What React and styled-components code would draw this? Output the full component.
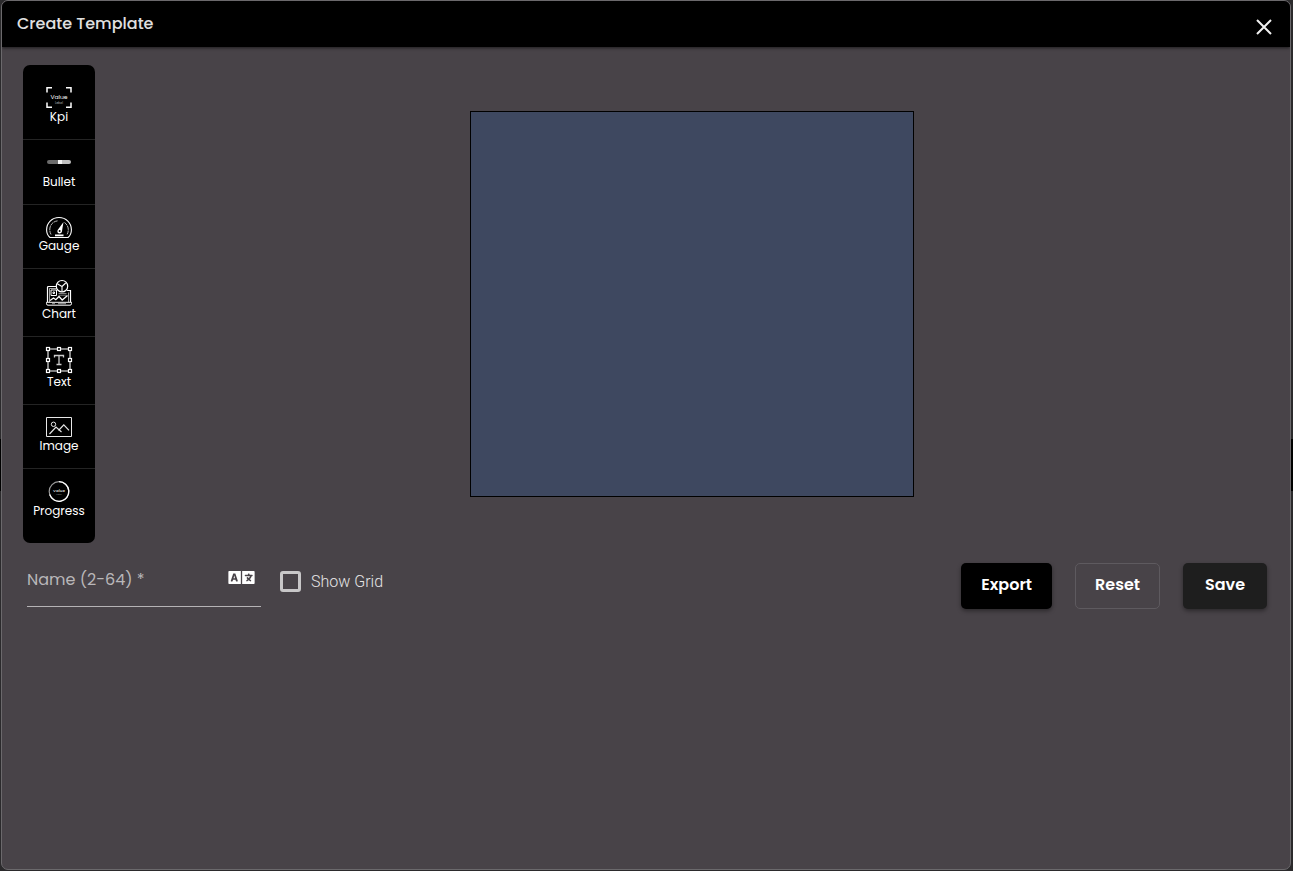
import { useState } from 'react';
import styled, { createGlobalStyle, css } from 'styled-components';
import { FaLanguage } from 'react-icons/fa';

const GlobalStyle = createGlobalStyle`
  * {
    box-sizing: border-box;
  }

  body {
    margin: 0;
    background-color: #2b2a2c;
    font-family: Poppins, Inter, sans-serif;
  }
`;

const Page = styled.div`
  position: relative;
  display: flex;
  min-height: 100vh;
  padding: 0 2px 1px 1px;
  overflow: hidden;
`;

/* Strip of the page that shows behind the dialog */
const PageStrip = styled.div`
  position: absolute;
  top: 439px;
  left: 0;
  right: 0;
  height: 52px;
  background-color: #000;
`;

const Dialog = styled.section`
  position: relative;
  flex: 1;
  border: 1px solid #6b696c;
  border-radius: 7px;
  background-color: #484348;
  overflow: hidden;
`;

const Header = styled.header`
  display: flex;
  align-items: center;
  justify-content: space-between;
  height: 46px;
  padding: 0 15px;
  background-color: #000;
  box-shadow: 0 1px 3px rgba(0, 0, 0, 0.6);
`;

const Title = styled.h1`
  margin: 0;
  color: #e0e0e0;
  font-size: 16px;
  font-weight: 500;
  line-height: 24px;
`;

const CloseButton = styled.button`
  display: flex;
  margin: 6px 0 0;
  padding: 2px;
  border: 0;
  background: none;
  color: #f0f0f0;
  cursor: pointer;
`;

const Workspace = styled.div`
  display: flex;
  align-items: center;
  padding: 18px 2px 20px 21px;
`;

const Toolbar = styled.nav`
  display: flex;
  flex-direction: column;
  width: 72px;
  padding: 10px 0;
  border-radius: 7px;
  background-color: #000;
`;

const Tool = styled.button`
  display: flex;
  flex-direction: column;
  align-items: center;
  padding: 12px 0 14px;
  border: 0;
  border-bottom: 1px solid #242424;
  background: none;
  color: #fff;
  font-family: inherit;
  font-size: 12px;
  line-height: 16px;
  cursor: pointer;

  &:last-child {
    border-bottom: 0;
  }

  svg {
    display: block;
    overflow: visible;
  }
`;

const CanvasArea = styled.main`
  display: flex;
  flex: 1;
  justify-content: center;
`;

const Canvas = styled.div`
  width: 444px;
  height: 386px;
  border: 1px solid #000;
  background-color: #3e4860;
`;

const Footer = styled.form`
  display: flex;
  align-items: flex-start;
  padding: 0 23px 0 25px;
`;

const Field = styled.div`
  display: flex;
  align-items: flex-start;
  width: 234px;
  height: 44px;
  padding-right: 6px;
  border-bottom: 1px solid #b5b3b5;
`;

const NameInput = styled.input`
  flex: 1;
  min-width: 0;
  height: 32px;
  padding: 0;
  border: 0;
  outline: 0;
  background: none;
  color: #fff;
  font-family: inherit;
  font-size: 16px;

  &::placeholder {
    color: #b9b7b9;
    opacity: 1;
  }
`;

const LanguageButton = styled.button`
  display: flex;
  margin-top: 4px;
  padding: 0;
  border: 0;
  background: none;
  color: #fff;
  cursor: pointer;

  svg {
    width: 27px;
    height: 21px;
  }
`;

const CheckLabel = styled.label`
  display: flex;
  align-items: center;
  gap: 10px;
  height: 37px;
  margin-left: 19px;
  color: #e6e5e6;
  font-family: Roboto, sans-serif;
  font-size: 16px;
  font-weight: 300;
`;

const Checkbox = styled.input`
  appearance: none;
  width: 21px;
  height: 21px;
  margin: 0;
  border: 3px solid #c8c7c8;
  border-radius: 3px;

  &:checked {
    background-color: #c8c7c8;
  }
`;

const Actions = styled.div`
  display: flex;
  gap: 23px;
  margin-left: auto;
`;

const variants = {
  export: css`
    background-color: #000;
  `,
  reset: css`
    border-color: #5e5a5f;
    background-color: transparent;
    box-shadow: none;
  `,
  save: css`
    background-color: #1e1e1e;
  `,
};

const ActionButton = styled.button`
  min-width: 84px;
  height: 46px;
  padding: 0 19px 3px;
  border: 1px solid transparent;
  border-radius: 5px;
  box-shadow: 0 2px 4px rgba(0, 0, 0, 0.4);
  color: #fff;
  font-family: inherit;
  font-size: 16px;
  font-weight: 600;
  cursor: pointer;
  ${({ $variant }) => variants[$variant]}
`;

const KpiIcon = () => (
  <svg width="26" height="22" viewBox="0 0 26 22" fill="none" stroke="#fff" strokeWidth="1.5">
    <path d="M1 5.5V.7h5M20 .7h5v4.8M25 15.5v4.8h-5M6 20.3H1v-4.8" />
    <text x="13" y="12" fill="#fff" stroke="none" fontSize="6" textAnchor="middle">Value</text>
    <text x="13" y="16.5" fill="#bbb" stroke="none" fontSize="3" textAnchor="middle">Label</text>
  </svg>
);

const BulletIcon = () => (
  <svg width="26" height="22" viewBox="0 0 26 22">
    <path d="M3 8h9v4H3a2 2 0 0 1 0-4z" fill="#6c6c6c" />
    <path d="M12 8h5v4h-5z" fill="#f4f4f4" />
    <path d="M16 8h7a2 2 0 0 1 0 4h-7z" fill="#c0c0c0" />
  </svg>
);

const GaugeIcon = () => (
  <svg width="26" height="21" viewBox="0 0 26 21" fill="none" stroke="#fff">
    <path d="M4 20.5C1.8 18.7.6 16 .6 12.7.6 6 6 .5 13 .5s12.400 5.500 12.400 12.200c0 3.300-1.200 6-3.400 7.800z" strokeWidth="1.1" />
    <path d="M5 17.5c-3-5.500-.5-13 7-13.700M18.500 5.500c4 2.800 4.900 8 2.500 12" strokeWidth=".9" stroke="#ccc" strokeDasharray="4 .6" />
    <path d="M17.5 5l-5.800 8c-1 1.800.2 3.500 1.800 3.500s2.500-1.200 2.500-2.500z" fill="#fff" stroke="none" />
    <circle cx="13.6" cy="14" r="1" fill="#000" stroke="none" />
    <path d="M9 18.3h8.500" strokeWidth="1.8" />
  </svg>
);

const ChartIcon = () => (
  <svg width="26" height="25" viewBox="0 0 26 25" fill="none" stroke="#fff">
    <path d="M10.5 5.500H2.500Q1.500 5.500 1.500 6.500V21M21 9.500h3.500V21" strokeWidth="1.2" />
    <path d="M3.500 21V7.500h7M22.500 11.500V21" strokeWidth=".8" stroke="#ccc" />
    <path d="M.5 21.300h25v1.400q0 1.500-1.500 1.500H2q-1.500 0-1.500-1.500z" strokeWidth="1" />
    <path d="M6 22.700h3M12 22.700h8" strokeWidth=".8" stroke="#ccc" />
    <circle cx="16" cy="5.2" r="5.7" strokeWidth="1.2" />
    <path d="M16 10.500V5.500l-4.700-2.800M16 5.500l3.700-3.500" strokeWidth="1.1" />
    <path d="M5 9h5.500v5.500H5zM7 12.500V11h1.500v1.500z" strokeWidth="1" />
    <path d="M12.500 12.500h8M12.500 14.200h8" strokeWidth=".7" stroke="#bbb" />
    <path d="M4 19.500l3.500-2.500 2.300 1.700 3.200-3.200 3.200 3.500 3-2.500 2.300-2" strokeWidth="1.3" />
  </svg>
);

const handles = [[0, -2], [11, -2], [22, -2], [0, 9], [22, 9], [0, 20], [11, 20], [22, 20]];

const TextIcon = () => (
  <svg width="26" height="25" viewBox="0 0 26 25" fill="none" stroke="#fff">
    <path d="M2 0h22v22H2z" stroke="#aaa" strokeWidth="1.6" />
    <path d="M8.500 8.500V6.500h9v2M13 6.500v9M10.500 15.500h5" stroke="#ccc" strokeWidth="1.3" />
    {handles.map(([x, y]) => (
      <rect key={`${x}-${y}`} x={x + 0.5} y={y + 0.5} width="3" height="3" fill="#000" strokeWidth="1.2" />
    ))}
  </svg>
);

const ImageIcon = () => (
  <svg width="26" height="21" viewBox="0 0 26 21" fill="none" stroke="#e8e8e8">
    <path d="M.5.5h25v19H.5z" strokeWidth="1" />
    <circle cx="7.5" cy="7.3" r="2.2" strokeWidth="1" />
    <path d="M3.500 17l6.500-7 5.500 5M12.500 13.500l5.300-5.700 5.200 5.500" strokeWidth="1.2" />
  </svg>
);

const ProgressIcon = () => (
  <svg width="26" height="22" viewBox="0 0 26 22" fill="none">
    <circle cx="13" cy="10.5" r="9.8" stroke="#999" strokeWidth="1.2" />
    <path d="M13 .7a9.800 9.800 0 1 1-9.300 12.800" stroke="#fff" strokeWidth="1.3" />
    <text x="13" y="10.5" fill="#ccc" fontSize="4" fontWeight="600" textAnchor="middle">Value</text>
    <text x="13" y="14" fill="#888" fontSize="2" textAnchor="middle">Label</text>
  </svg>
);

const tools = [
  { label: 'Kpi', Icon: KpiIcon },
  { label: 'Bullet', Icon: BulletIcon },
  { label: 'Gauge', Icon: GaugeIcon },
  { label: 'Chart', Icon: ChartIcon },
  { label: 'Text', Icon: TextIcon },
  { label: 'Image', Icon: ImageIcon },
  { label: 'Progress', Icon: ProgressIcon },
];

function App() {
  const [name, setName] = useState('');
  const [showGrid, setShowGrid] = useState(false);

  return (
    <Page>
      <GlobalStyle />
      <PageStrip />
      <Dialog role="dialog" aria-labelledby="dialog-title">
        <Header>
          <Title id="dialog-title">Create Template</Title>
          <CloseButton type="button" aria-label="Close">
            <svg width="18" height="18" viewBox="0 0 18 18" fill="none" stroke="currentColor" strokeWidth="2">
              <path d="M2 2l14 14M16 2L2 16" />
            </svg>
          </CloseButton>
        </Header>

        <Workspace>
          <Toolbar aria-label="Widgets">
            {tools.map(({ label, Icon }) => (
              <Tool key={label} type="button">
                <Icon />
                {label}
              </Tool>
            ))}
          </Toolbar>
          <CanvasArea>
            <Canvas />
          </CanvasArea>
        </Workspace>

        <Footer onSubmit={(e) => e.preventDefault()}>
          <Field>
            <NameInput
              aria-label="Name"
              placeholder="Name (2-64) *"
              value={name}
              onChange={(e) => setName(e.target.value)}
            />
            <LanguageButton type="button" aria-label="Translate name">
              <FaLanguage />
            </LanguageButton>
          </Field>
          <CheckLabel>
            <Checkbox
              type="checkbox"
              checked={showGrid}
              onChange={(e) => setShowGrid(e.target.checked)}
            />
            Show Grid
          </CheckLabel>
          <Actions>
            <ActionButton type="button" $variant="export">Export</ActionButton>
            <ActionButton type="reset" $variant="reset">Reset</ActionButton>
            <ActionButton type="submit" $variant="save">Save</ActionButton>
          </Actions>
        </Footer>
      </Dialog>
    </Page>
  );
}

export default App;
